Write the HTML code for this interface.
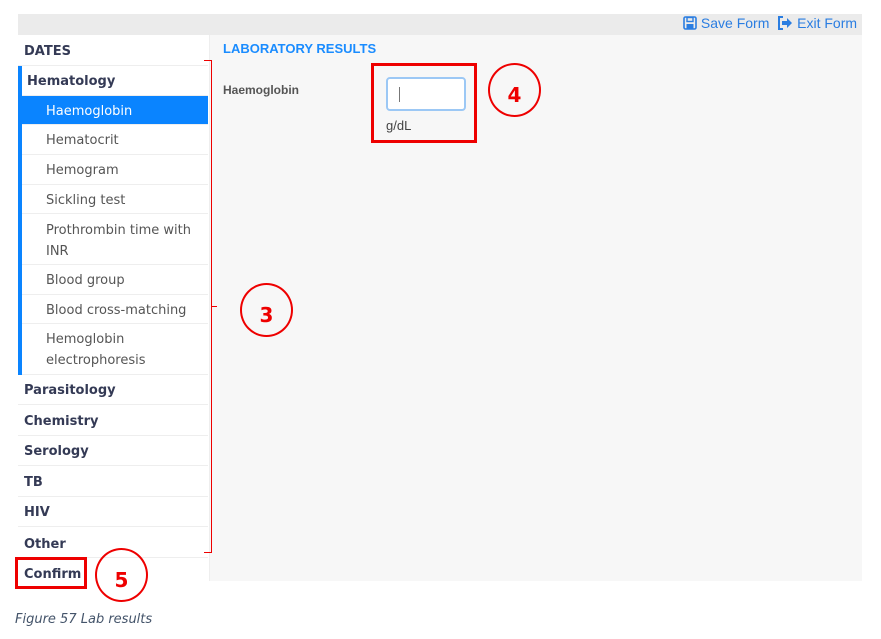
<!DOCTYPE html>
<html><head><style>
body{margin:0;width:881px;height:639px;background:#fff;position:relative;overflow:hidden;font-family:"Liberation Sans",sans-serif}
.a{position:absolute}
.row{position:absolute;left:18px;width:190px;border-bottom:1px solid #eee;font-family:"DejaVu Sans","Liberation Sans",sans-serif;font-size:13px;font-weight:bold;color:#343a55;box-sizing:border-box;padding-left:6px;padding-top:1px}
.sub{position:absolute;left:22px;width:186px;border-bottom:1px solid #eee;font-family:"DejaVu Sans","Liberation Sans",sans-serif;font-size:13px;color:#555;box-sizing:border-box;padding-left:24px;line-height:21px;padding-top:1px}
.circ{position:absolute;width:53px;height:54px;border:2px solid #e00;border-radius:50%;color:#e00;font:bold 20px "DejaVu Sans",sans-serif;text-align:center;line-height:60px;box-sizing:border-box}
</style></head><body>
<div class="a" style="left:18px;top:14px;width:844px;height:21px;background:#ebebeb"></div>
<div class="a" style="left:683px;top:15px;font-size:14px;color:#2a7de1">
<svg width="14" height="14" viewBox="0 0 14 14" style="vertical-align:-2px"><rect x="1" y="1" width="12" height="12" rx="1.5" fill="none" stroke="#2a7de1" stroke-width="1.6"/><rect x="4" y="1.5" width="6" height="4" fill="none" stroke="#2a7de1" stroke-width="1.4"/><rect x="3.5" y="8" width="7" height="4.5" fill="#2a7de1"/></svg> Save Form
<svg width="16" height="14" viewBox="0 0 16 14" style="vertical-align:-2px;margin-left:4px"><path d="M6 1H2v12h4" fill="none" stroke="#2a7de1" stroke-width="2"/><path d="M5 5h5V2l5 5-5 5V9H5z" fill="#2a7de1"/></svg> Exit Form</div>
<div class="a" style="left:18px;top:35px;width:191px;height:546px;background:#fff;border-right:2px solid #eee"></div>
<div class="a" style="left:210px;top:35px;width:652px;height:546px;background:#f7f7f7"></div>
<div class="row" style="top:35px;height:31px;line-height:31px">DATES</div>
<div class="a" style="left:18px;top:66px;width:4px;height:309px;background:#0a84ff"></div>
<div class="row" style="left:22px;width:186px;top:66px;height:30px;line-height:30px;padding-left:5px">Hematology</div>
<div class="sub" style="top:96px;height:29px;line-height:29px;background:#0a84ff;color:#fff">Haemoglobin</div>
<div class="sub" style="top:125px;height:30px;line-height:30px">Hematocrit</div>
<div class="sub" style="top:155px;height:30px;line-height:30px">Hemogram</div>
<div class="sub" style="top:185px;height:29px;line-height:29px">Sickling test</div>
<div class="sub" style="top:214px;height:51px;padding-top:6px">Prothrombin time with INR</div>
<div class="sub" style="top:265px;height:30px;line-height:30px">Blood group</div>
<div class="sub" style="top:295px;height:29px;line-height:29px">Blood cross-matching</div>
<div class="sub" style="top:324px;height:51px;padding-top:5px">Hemoglobin electrophoresis</div>
<div class="row" style="top:375px;height:30px;line-height:30px">Parasitology</div>
<div class="row" style="top:405px;height:31px;line-height:31px">Chemistry</div>
<div class="row" style="top:436px;height:30px;line-height:30px">Serology</div>
<div class="row" style="top:466px;height:31px;line-height:31px">TB</div>
<div class="row" style="top:497px;height:30px;line-height:30px">HIV</div>
<div class="row" style="top:527px;height:31px;line-height:33px">Other</div>
<div class="row" style="top:558px;height:31px;line-height:31px;border:none">Confirm</div>
<div class="a" style="left:15px;top:557px;width:72px;height:32px;border:3px solid #e00;box-sizing:border-box"></div>
<div class="a" style="left:223px;top:41px;font:bold 13px 'Liberation Sans',sans-serif;color:#1a8cff">LABORATORY RESULTS</div>
<div class="a" style="left:223px;top:83px;font:bold 12px 'Liberation Sans',sans-serif;color:#555">Haemoglobin</div>
<div class="a" style="left:386px;top:77px;width:80px;height:34px;background:#fff;border:2px solid #9cc8f5;border-radius:4px;box-sizing:border-box"><div style="position:absolute;left:11px;top:8px;width:1px;height:15px;background:#777"></div></div>
<div class="a" style="left:386px;top:118px;font-size:13px;color:#444">g/dL</div>
<div class="a" style="left:371px;top:63px;width:106px;height:80px;border:3px solid #e00;box-sizing:border-box"></div>
<div class="a" style="left:204px;top:60px;width:8px;height:493px;border:1px solid #e00;border-left:none;box-sizing:border-box"></div>
<div class="a" style="left:212px;top:306px;width:5px;height:1px;background:#e00"></div>
<div class="circ" style="left:240px;top:283px">3</div>
<div class="circ" style="left:488px;top:63px">4</div>
<div class="circ" style="left:95px;top:548px">5</div>
<div class="a" style="left:15px;top:612px;font:italic 13px 'DejaVu Sans','Liberation Sans',sans-serif;color:#44546a">Figure 57 Lab results</div>
</body></html>
